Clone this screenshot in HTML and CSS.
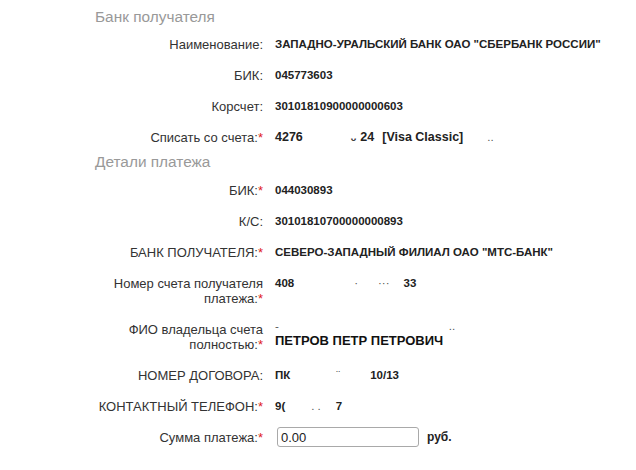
FILE: index.html
```html
<!DOCTYPE html>
<html lang="ru">
<head>
<meta charset="utf-8">
<link rel="stylesheet" href="styles.css">
</head>
<body>
<div class="form">
  <div class="section first">Банк получателя</div>
  <div class="row"><div class="label">Наименование:</div><div class="value">ЗАПАДНО-УРАЛЬСКИЙ БАНК ОАО "СБЕРБАНК РОССИИ"</div></div>
  <div class="row"><div class="label">БИК:</div><div class="value">045773603</div></div>
  <div class="row"><div class="label">Корсчет:</div><div class="value">30101810900000000603</div></div>
  <div class="row"><div class="label">Списать со счета:<span class="req">*</span></div><div class="value"><span class="wide">4276</span><span class="gap g1"></span><span class="tiny">ᴗ</span><span class="gap g11"></span><span class="wide">24</span><span class="gap g12"></span><span class="wide">[Visa Classic]</span><span class="gap g2"></span><span class="dots">..</span></div></div>
  <div class="section">Детали платежа</div>
  <div class="row"><div class="label">БИК:<span class="req">*</span></div><div class="value">044030893</div></div>
  <div class="row"><div class="label">К/С:</div><div class="value">30101810700000000893</div></div>
  <div class="row"><div class="label">БАНК ПОЛУЧАТЕЛЯ:<span class="req">*</span></div><div class="value">СЕВЕРО-ЗАПАДНЫЙ ФИЛИАЛ ОАО "МТС-БАНК"</div></div>
  <div class="row"><div class="label">Номер счета получателя<br>платежа:<span class="req">*</span></div><div class="value">408<span class="gap g3"></span><span class="dots">·</span><span class="gap g4"></span><span class="dots">···</span><span class="gap g5"></span>33</div></div>
  <div class="row"><div class="label">ФИО владельца счета<br>полностью:<span class="req">*</span></div><div class="value"><div class="mark"><span class="dots">-</span><span class="gap g6"></span><span class="dots">..</span></div><div class="name">ПЕТРОВ ПЕТР ПЕТРОВИЧ</div></div></div>
  <div class="row"><div class="label">НОМЕР ДОГОВОРА:</div><div class="value">ПК<span class="gap g7"></span><span class="dots">¨</span><span class="gap g8"></span>10/13</div></div>
  <div class="row"><div class="label">КОНТАКТНЫЙ ТЕЛЕФОН:<span class="req">*</span></div><div class="value">9(<span class="gap g9"></span><span class="dots">. .</span><span class="gap g10"></span>7</div></div>
  <div class="row input-row"><div class="label">Сумма платежа:<span class="req">*</span></div><div class="value"><input class="sum" type="text" value="0.00"><span class="unit">руб.</span></div></div>
</div>
</body>
</html>
```
FILE: styles.css
```css
html, body {
  margin: 0;
  padding: 0;
  background: #fff;
}
body {
  font-family: Arial, "Liberation Sans", sans-serif;
  color: #333;
}
.form {
  width: 636px;
}
.section {
  padding-left: 95px;
  font-size: 15.4px;
  line-height: 21px;
  height: 21px;
  color: #999;
  margin-top: -3px;
  margin-bottom: 3px;
}
.section.first {
  margin-top: 6px;
  margin-bottom: 2px;
}
.row {
  display: grid;
  grid-template-columns: 263px 1fr;
  column-gap: 12px;
  padding: 8px 0;
  line-height: 15px;
}
.label {
  text-align: right;
  font-size: 13px;
  color: #333;
}
.req {
  color: #e02020;
}
.value {
  font-size: 11.5px;
  font-weight: bold;
  color: #222;
}
.wide {
  font-size: 12.5px;
}
.gap {
  display: inline-block;
}
.g1 { width: 48px; }
.g11 { width: 4px; }
.g12 { width: 8px; }
.g2 { width: 24px; }
.g3 { width: 60px; }
.g4 { width: 20px; }
.g5 { width: 14px; }
.g6 { width: 170px; }
.g7 { width: 46px; }
.g8 { width: 30px; }
.g9 { width: 26px; }
.g10 { width: 15px; }
.tiny {
  font-size: 9px;
}
.dots {
  font-weight: normal;
  color: #555;
}
.mark {
  line-height: 8px;
  height: 10px;
}
.name {
  font-size: 13px;
  line-height: 17px;
  color: #111;
}
.input-row {
  padding: 5px 0;
  align-items: center;
}
.input-row .value {
  display: flex;
  align-items: center;
}
.sum {
  box-sizing: border-box;
  width: 142px;
  height: 20px;
  border: 1px solid #a9a9a9;
  border-radius: 3px;
  padding: 0 3px;
  margin: 0 0 0 2px;
  font-family: Arial, "Liberation Sans", sans-serif;
  font-size: 13px;
  color: #222;
  outline: none;
}
.unit {
  margin-left: 8px;
  font-size: 12px;
  font-weight: bold;
}
```
